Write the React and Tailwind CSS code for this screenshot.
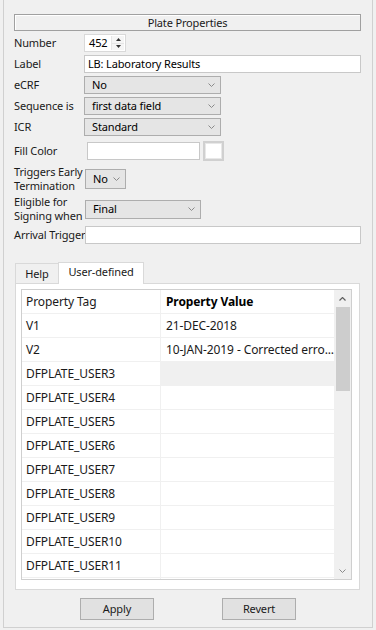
import React from "react";

const Chevron = ({ className = "" }) => (
  <svg width="7" height="4" viewBox="0 0 7 4" className={className}>
    <polyline points="0.5,0.5 3.5,3.5 6.5,0.5" fill="none" stroke="#8a8a8a" strokeWidth="1" />
  </svg>
);

const ChevronUp = ({ className = "" }) => (
  <svg width="7" height="4" viewBox="0 0 7 4" className={className}>
    <polyline points="0.5,3.5 3.5,0.5 6.5,3.5" fill="none" stroke="#606060" strokeWidth="1.2" />
  </svg>
);

function Combo({ className, value }) {
  return (
    <div className={`flex items-center justify-between border border-[#adadad] bg-[#e5e5e5] pl-[7px] pr-[5px] ${className}`}>
      <span className="text-black">{value}</span>
      <Chevron />
    </div>
  );
}

const rows = [
  ["V1", "21-DEC-2018"],
  ["V2", "10-JAN-2019 - Corrected erro..."],
  ["DFPLATE_USER3", ""],
  ["DFPLATE_USER4", ""],
  ["DFPLATE_USER5", ""],
  ["DFPLATE_USER6", ""],
  ["DFPLATE_USER7", ""],
  ["DFPLATE_USER8", ""],
  ["DFPLATE_USER9", ""],
  ["DFPLATE_USER10", ""],
  ["DFPLATE_USER11", ""],
  ["", ""],
];

export default function App() {
  return (
    <div className="w-[376px] h-[630px] bg-[#f0f0f0] overflow-hidden font-['Noto_Sans',sans-serif] text-[11px] tracking-[-0.15px] text-[#1a1a1a]">
      <div className="ml-[3px] w-[370px] h-[628px] border-l border-r border-b border-[#d0d0d0] pl-[10px] pr-[10px] pt-[14px]">
        {/* Title */}
        <div className="h-[17px] w-[347px] border border-[#a0a0a0] shadow-[inset_1px_1px_0_#ffffff] flex items-center justify-center leading-none">
          Plate Properties
        </div>

        {/* Number */}
        <div className="flex items-center h-[18px] mt-[3px]">
          <div className="w-[70px] shrink-0">Number</div>
          <div className="flex h-[18px] w-[42px] border border-[#d9d9d9] bg-white">
            <div className="flex-1 pl-[4px] flex items-center text-black">452</div>
            <div className="w-[13px] flex flex-col border-l border-[#e6e6e6] my-[1px] mr-[1px]">
              <div className="flex-1 flex items-center justify-center border-b border-[#e6e6e6] bg-[#f5f5f5]">
                <svg width="5" height="3" viewBox="0 0 5 3"><polygon points="0,3 2.5,0 5,3" fill="#333" /></svg>
              </div>
              <div className="flex-1 flex items-center justify-center bg-[#f5f5f5]">
                <svg width="5" height="3" viewBox="0 0 5 3"><polygon points="0,0 2.5,3 5,0" fill="#333" /></svg>
              </div>
            </div>
          </div>
        </div>

        {/* Label */}
        <div className="flex items-center h-[18px] mt-[3px]">
          <div className="w-[70px] shrink-0">Label</div>
          <div className="h-[18px] w-[277px] border border-[#c8c8c8] bg-white flex items-center pl-[3px] text-black">
            LB: Laboratory Results
          </div>
        </div>

        {/* eCRF */}
        <div className="flex items-center h-[18px] mt-[3px]">
          <div className="w-[70px] shrink-0">eCRF</div>
          <Combo className="h-[18px] w-[137px]" value="No" />
        </div>

        {/* Sequence */}
        <div className="flex items-center h-[18px] mt-[3px]">
          <div className="w-[70px] shrink-0 whitespace-nowrap">Sequence is</div>
          <Combo className="h-[18px] w-[137px]" value="first data field" />
        </div>

        {/* ICR */}
        <div className="flex items-center h-[18px] mt-[3px]">
          <div className="w-[70px] shrink-0">ICR</div>
          <Combo className="h-[18px] w-[137px]" value="Standard" />
        </div>

        {/* Fill Color */}
        <div className="flex items-center h-[20px] mt-[5px]">
          <div className="w-[73px] shrink-0 whitespace-nowrap">Fill Color</div>
          <div className="h-[18px] w-[113px] border border-[#c8c8c8] bg-white" />
          <div className="ml-[3px] h-[20px] w-[21px] border-2 border-[#d0d0d0] bg-white shadow-[inset_0_0_0_1px_#e8e8e8]" />
        </div>

        {/* Triggers Early Termination */}
        <div className="flex items-center h-[22px] mt-[7px]">
          <div className="w-[71px] shrink-0 leading-[14px] whitespace-nowrap">Triggers Early<br />Termination</div>
          <Combo className="h-[20px] w-[41px]" value="No" />
        </div>

        {/* Eligible */}
        <div className="flex items-center h-[22px] mt-[8px]">
          <div className="w-[71px] shrink-0 leading-[14px] whitespace-nowrap">Eligible for<br />Signing when</div>
          <Combo className="h-[19px] w-[116px]" value="Final" />
        </div>

        {/* Arrival Trigger */}
        <div className="flex items-center h-[18px] mt-[6px]">
          <div className="w-[71px] shrink-0 whitespace-nowrap">Arrival Trigger</div>
          <div className="h-[18px] w-[276px] border border-[#c8c8c8] bg-white" />
        </div>

        {/* Tabs */}
        <div className="ml-[1px] mt-[17px] flex items-end h-[22px]">
          <div className="h-[20px] w-[44px] border border-b-0 border-[#d9d9d9] bg-[#f0f0f0] flex items-center justify-center pt-[2px]">
            Help
          </div>
          <div className="relative z-10 h-[22px] w-[86px] -ml-[1px] border border-b-0 border-[#d9d9d9] bg-white flex items-center justify-center pb-[2px] mb-[-1px]">
            User-defined
          </div>
        </div>
        <div className="ml-[1px] w-[345px] h-[307px] border border-[#d9d9d9] bg-white pl-[5px] pt-[5px]">
          <div className="w-[331px] h-[291px] border border-[#cfcfcf] flex overflow-hidden text-[12px] tracking-[-0.1px] text-[#1a1a1a]">
            <div className="w-[312px] shrink-0 flex flex-col">
              <div className="flex h-[24px] border-b border-[#f0f0f0] shrink-0">
                <div className="w-[139px] shrink-0 border-r border-[#f0f0f0] pl-[4px] flex items-center">Property Tag</div>
                <div className="flex-1 min-w-0 pl-[5px] flex items-center font-bold text-black">Property Value</div>
              </div>
              {rows.map(([t, v], i) => (
                <div key={i} className="flex h-[24px] border-b border-[#f0f0f0] shrink-0">
                  <div className="w-[139px] shrink-0 border-r border-[#f0f0f0] pl-[4px] flex items-center whitespace-nowrap">{t}</div>
                  <div className={`flex-1 min-w-0 overflow-hidden pl-[5px] flex items-center whitespace-nowrap ${i === 2 ? "bg-[#f0f0f0]" : ""}`}>{v}</div>
                </div>
              ))}
            </div>
            <div className="w-[17px] shrink-0 bg-[#f0f0f0] flex flex-col items-center">
              <div className="h-[17px] flex items-center justify-center"><ChevronUp /></div>
              <div className="w-[14px] h-[84px] bg-[#cdcdcd]" />
              <div className="flex-1" />
              <div className="h-[17px] flex items-center justify-center"><Chevron /></div>
            </div>
          </div>
        </div>

        {/* Buttons */}
        <div className="flex mt-[8px]">
          <div className="ml-[66px] h-[22px] w-[74px] border border-[#adadad] bg-[#e1e1e1] flex items-center justify-center">Apply</div>
          <div className="ml-[68px] h-[22px] w-[74px] border border-[#adadad] bg-[#e1e1e1] flex items-center justify-center">Revert</div>
        </div>
      </div>
    </div>
  );
}
